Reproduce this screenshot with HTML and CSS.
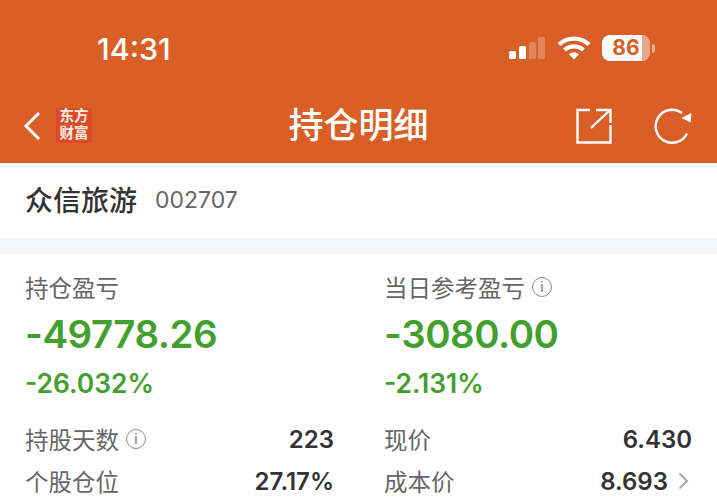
FILE: index.html
```html
<!DOCTYPE html>
<html lang="zh-CN">
<head>
<meta charset="UTF-8" />
<title>持仓明细</title>
<link rel="stylesheet" href="styles.css">
</head>
<body>
<header class="top">
  <div class="status">
    <span class="time">14:31</span>
    <div class="status-icons">
      <svg class="signal" width="36" height="22" viewBox="0 0 36 22">
        <rect x="0" y="14" width="7" height="8" rx="1.500" fill="#fff"/>
        <rect x="10" y="9" width="7" height="13" rx="1.500" fill="#fff"/>
        <rect x="20" y="5" width="7" height="17" rx="1.500" fill="#fff" opacity=".25"/>
        <rect x="29" y="0" width="7" height="22" rx="1.500" fill="#fff" opacity=".25"/>
      </svg>
      <svg class="wifi" width="32" height="24" viewBox="0 0 32 24">
        <path d="M1 8.500a22 22 0 0 1 30 0" fill="none" stroke="#fff" stroke-width="4.400"/>
        <path d="M6.500 14a14 14 0 0 1 19 0" fill="none" stroke="#fff" stroke-width="4.200"/>
        <path d="M11 18.200a7.400 7.400 0 0 1 10 0L16 23.500z" fill="#fff"/>
      </svg>
      <div class="battery"><span class="battery-num">86</span></div>
      <span class="battery-cap"></span>
    </div>
  </div>
  <nav class="nav">
    <div class="nav-left">
      <svg width="18" height="30" viewBox="0 0 18 30"><path d="M16 2 3 15l13 13" fill="none" stroke="#fff" stroke-width="3"/></svg>
      <div class="logo">东方<br>财富</div>
    </div>
    <h1 class="title">持仓明细</h1>
    <div class="nav-right">
      <svg width="36" height="36" viewBox="0 0 36 36">
        <path d="M14 2H1.500v32.500h33V17" fill="none" stroke="#fff" stroke-width="2.400"/>
        <path d="M15 20 34 2M20 2h14.500v13" fill="none" stroke="#fff" stroke-width="2.400"/>
      </svg>
      <svg width="38" height="36" viewBox="0 0 38 36">
        <path d="M33 25.500A16.500 16.500 0 1 1 28 5" fill="none" stroke="#fff" stroke-width="2.400"/>
        <path d="M37.300 5 36.700 14.500 27.500 10z" fill="#fff"/>
      </svg>
    </div>
  </nav>
</header>

<section class="stock">
  <span class="stock-name">众信旅游</span>
  <span class="stock-code">002707</span>
</section>

<main class="panel">
  <div class="col">
    <div class="label">持仓盈亏</div>
    <div class="big">-49778.26</div>
    <div class="pct">-26.032%</div>
    <div class="row first">
      <span class="label">持股天数<i class="info">i</i></span>
      <b>223</b>
    </div>
    <div class="row">
      <span class="label">个股仓位</span>
      <b>27.17%</b>
    </div>
  </div>
  <div class="col">
    <div class="label">当日参考盈亏<i class="info">i</i></div>
    <div class="big">-3080.00</div>
    <div class="pct">-2.131%</div>
    <div class="row first">
      <span class="label">现价</span>
      <b>6.430</b>
    </div>
    <div class="row">
      <span class="label">成本价</span>
      <b class="more">8.693<svg width="11" height="18" viewBox="0 0 11 18"><path d="M1.500 1.500 9 9l-7.500 7.500" fill="none" stroke="#a9a9a9" stroke-width="2"/></svg></b>
    </div>
  </div>
</main>
</body>
</html>
```

FILE: styles.css
```css
* { box-sizing: border-box; }
html, body { height: 500px; overflow: hidden; }
body { margin: 0; background: #fff; font-family: Inter, "Liberation Sans", "Noto Sans CJK SC", sans-serif; color: #333; }

.top { height: 163px; background: #d95f27; color: #fff; }
.status { height: 88px; display: flex; justify-content: space-between; align-items: center; padding: 8px 62px 0 97px; }
.time { font-size: 30.500px; font-weight: 500; }
.status-icons { display: flex; align-items: center; }
.signal { margin-right: 13px; }
.wifi { margin-right: 12px; }
.battery { width: 48px; height: 26px; border-radius: 8px; background: linear-gradient(90deg, #fff 83%, rgba(255,255,255,.45) 83%); text-align: center; }
.battery-num { display: block; font-size: 21px; line-height: 26px; font-weight: 700; color: #d95f27; }
.battery-cap { width: 3px; height: 9px; margin-left: 2px; background: rgba(255,255,255,.5); border-radius: 0 3px 3px 0; }

.nav { height: 75px; padding: 0 25px 0 23px; display: flex; align-items: center; justify-content: space-between; position: relative; }
.nav-left { display: flex; align-items: center; gap: 15px; }
.logo { width: 36px; height: 35px; background: #dc4a2a; text-align: center; font-family: "Liberation Sans", "Noto Sans CJK SC", sans-serif; font-size: 14.500px; line-height: 16.700px; font-weight: 700; color: #fdeee0; }
.title { position: absolute; left: 0; right: 0; margin: 0 0 7px; text-align: center; font-family: "Noto Sans CJK SC", sans-serif; font-size: 35px; font-weight: 500; }
.nav-right { display: flex; align-items: center; gap: 42px; }

.stock { height: 91px; border-bottom: 16px solid #f5f6f8; display: flex; align-items: center; padding-left: 25px; gap: 18px; }
.stock-name { font-family: "Noto Sans CJK SC", sans-serif; font-size: 28px; font-weight: 500; color: #333; margin-top: -3px; }
.stock-code { font-size: 23px; color: #666; margin-top: -1px; }

.panel { display: grid; grid-template-columns: 309px 308px; column-gap: 50px; padding: 16px 0 0 25px; }
.label { font-family: "Noto Sans CJK SC", sans-serif; font-size: 23.500px; line-height: 34px; color: #666; display: flex; align-items: center; }
.info { width: 20px; height: 20px; margin-left: 7px; border: 1.500px solid #888; border-radius: 50%; font: 400 15px/17px "Liberation Sans", sans-serif; color: #777; text-align: center; }
.big { font-size: 38.500px; font-weight: 600; line-height: 50px; letter-spacing: -.5px; margin-top: 5px; color: #43a02e; }
.pct { font-size: 26.400px; font-weight: 600; line-height: 38px; margin-top: 5px; color: #43a02e; }
.row { display: flex; justify-content: space-between; align-items: center; height: 42px; }
.row.first { margin-top: 16px; }
.row b { font-size: 24px; font-weight: 600; color: #333; }
.more { display: flex; align-items: center; gap: 10px; margin-right: 3px; }
```
